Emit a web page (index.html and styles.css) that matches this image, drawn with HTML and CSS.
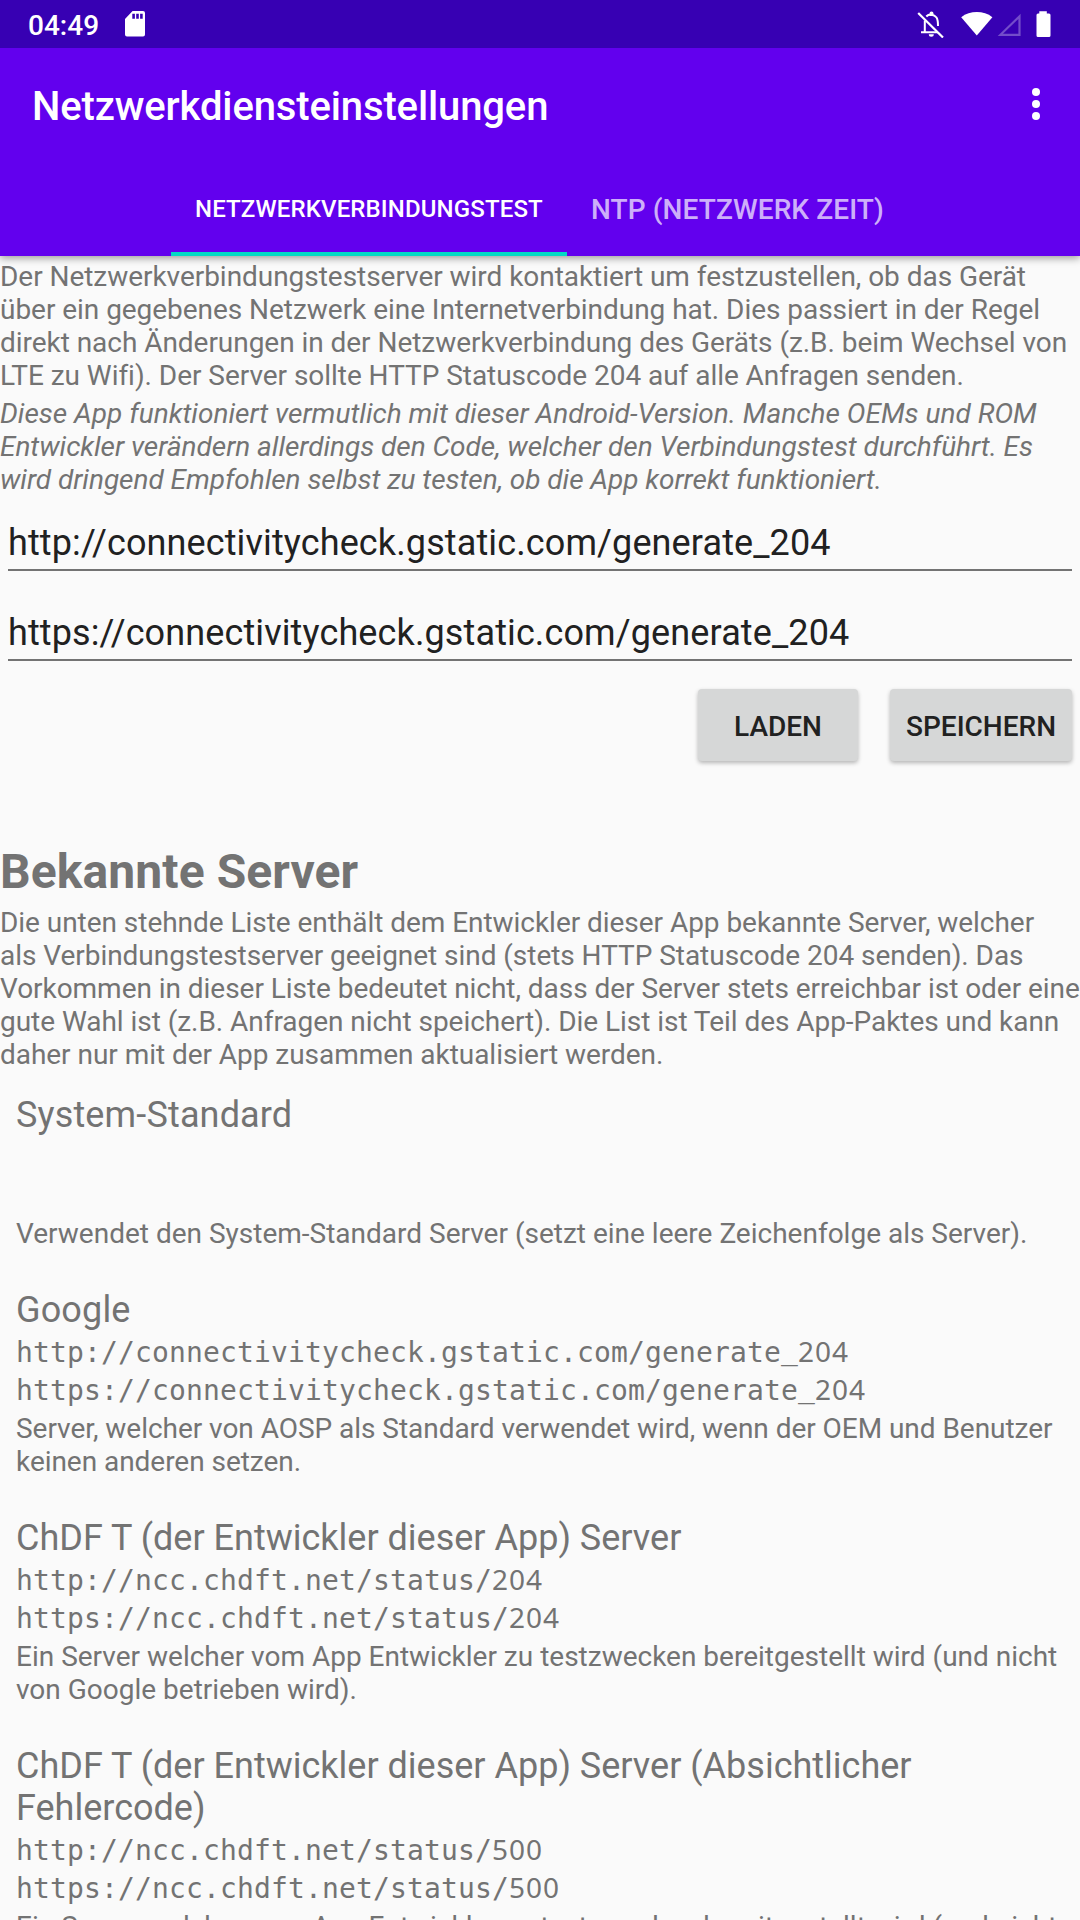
FILE: index.html
```html
<!DOCTYPE html>
<html lang="de">
<head>
<meta charset="utf-8">
<title>Netzwerkdiensteinstellungen</title>
<link rel="stylesheet" href="styles.css">
</head>
<body>
<div class="screen">
  <header class="header">
    <div class="status-bar">
      <span class="clock">04:49</span>
      <svg class="sd-icon" width="20" height="26" viewBox="0 0 20 26"><path fill="#fff" fill-rule="evenodd" d="M7.6 0H18a2 2 0 0 1 2 2v21.500a2 2 0 0 1-2 2H2a2 2 0 0 1-2-2V8zM7.300 2.700v5h2.600v-5zM11.200 2.700v5h2.600v-5zM15.100 2.700v5h2.600v-5z"/></svg>
      <span class="spacer"></span>
      <svg class="status-icons" width="136" height="28" viewBox="0 0 136 28">
        <g fill="none" stroke="#fff" stroke-width="2">
          <path d="M1.200 3 26 27.500" stroke-width="2.200"/>
          <path d="M7.800 10.500V22M4 22.300h17M9.300 6.500C12 3.700 17 4 19.500 7.500c1.300 2 1.500 4 1.500 8.500"/>
        </g>
        <path fill="#fff" d="M12.500 6V3.500a2 2 0 0 1 4 0V6zM11.800 24.300h5a2.500 2.500 0 0 1-5 0z"/>
        <path fill="#fff" d="M59.800 25.600 44.200 7.200C53 .4 66.600.4 75.400 7.200z"/>
        <path fill="none" stroke="#fff" stroke-opacity=".3" stroke-width="2.200" d="M102.500 6.400V24.800H83.400z"/>
        <path fill="#fff" d="M122.300 1.200h7.500V3.400h2.200a1.500 1.500 0 0 1 1.500 1.500V25.500a1.500 1.500 0 0 1-1.500 1.500H121a1.500 1.500 0 0 1-1.500-1.500V4.900A1.500 1.500 0 0 1 121 3.400h1.300z"/>
      </svg>
    </div>
    <div class="toolbar">
      <h1 class="app-title">Netzwerkdiensteinstellungen</h1>
      <svg class="menu-icon" width="8" height="32" viewBox="0 0 8 32" fill="#fff"><circle cx="4" cy="4" r="4"/><circle cx="4" cy="16" r="4"/><circle cx="4" cy="28" r="4"/></svg>
    </div>
    <nav class="tabs">
      <span class="tab tab-active">NETZWERKVERBINDUNGSTEST</span>
      <span class="tab tab-idle">NTP (NETZWERK ZEIT)</span>
    </nav>
  </header>
  <main>
    <p class="text text-tight">Der Netzwerkverbindungstestserver wird kontaktiert um festzustellen, ob das Gerät<br>über ein gegebenes Netzwerk eine Internetverbindung hat. Dies passiert in der Regel<br>direkt nach Änderungen in der Netzwerkverbindung des Geräts (z.B. beim Wechsel von<br>LTE zu Wifi). Der Server sollte HTTP Statuscode 204 auf alle Anfragen senden.</p>
    <p class="text text-italic">Diese App funktioniert vermutlich mit dieser Android-Version. Manche OEMs und ROM<br><span class="text-tight">Entwickler verändern allerdings den Code, welcher den Verbindungstest durchführt. Es<br>wird dringend Empfohlen selbst zu testen, ob die App korrekt funktioniert.</span></p>
    <div class="field"><div class="field-value">http://connectivitycheck.gstatic.com/generate_204</div></div>
    <div class="field"><div class="field-value">https://connectivitycheck.gstatic.com/generate_204</div></div>
    <div class="actions">
      <button class="button button-load">LADEN</button>
      <button class="button button-save">SPEICHERN</button>
    </div>
    <h2 class="heading">Bekannte Server</h2>
    <p class="text text-tight">Die unten stehnde Liste enthält dem Entwickler dieser App bekannte Server, welcher<br>als Verbindungstestserver geeignet sind (stets HTTP Statuscode 204 senden). Das<br>Vorkommen in dieser Liste bedeutet nicht, dass der Server stets erreichbar ist oder eine<br>gute Wahl ist (z.B. Anfragen nicht speichert). Die List ist Teil des App-Paktes und kann<br>daher nur mit der App zusammen aktualisiert werden.</p>
    <section class="server">
      <h3 class="name name-short">System-Standard</h3>
      <div class="url"></div>
      <div class="url"></div>
      <p class="text">Verwendet den System-Standard Server (setzt eine leere Zeichenfolge als Server).</p>
    </section>
    <section class="server">
      <h3 class="name name-short">Google</h3>
      <div class="url">http://connectivitycheck.gstatic.com/generate<span class="underscore">_</span><span class="digits">204</span></div>
      <div class="url">https://connectivitycheck.gstatic.com/generate<span class="underscore">_</span><span class="digits">204</span></div>
      <p class="text text-tight">Server, welcher von AOSP als Standard verwendet wird, wenn der OEM und Benutzer<br>keinen anderen setzen.</p>
    </section>
    <section class="server">
      <h3 class="name">ChDF T (der Entwickler dieser App) Server</h3>
      <div class="url">http://ncc.chdft.net/status/<span class="digits">204</span></div>
      <div class="url">https://ncc.chdft.net/status/<span class="digits">204</span></div>
      <p class="text">Ein Server welcher vom App Entwickler zu testzwecken bereitgestellt wird (und nicht<br>von Google betrieben wird).</p>
    </section>
    <section class="server">
      <h3 class="name">ChDF T (der Entwickler dieser App) Server (Absichtlicher<br>Fehlercode)</h3>
      <div class="url">http://ncc.chdft.net/status/<span class="digits">500</span></div>
      <div class="url">https://ncc.chdft.net/status/<span class="digits">500</span></div>
      <p class="text">Ein Server welcher vom App Entwickler zu testzwecken bereitgestellt wird (und nicht</p>
    </section>
  </main>
</div>
</body>
</html>
```
FILE: styles.css
```css
* { box-sizing: border-box; }
body, h1, h2, h3, p { margin: 0; }
body { background: #fafafa; }
.screen {
  width: 1080px;
  height: 1920px;
  overflow: hidden;
  background: #fafafa;
  color: #737373;
  font-family: Roboto, "Liberation Sans", sans-serif;
}
.header {
  position: relative;
  height: 256px;
  background: #6200ee;
  color: #fff;
  box-shadow: 0 2px 8px rgba(0, 0, 0, .4);
}
.status-bar {
  display: flex;
  height: 48px;
  padding: 0 27px 0 28px;
  background: #3700b3;
}
.clock { font-size: 28px; font-weight: 500; line-height: 51px; width: 97px; }
.sd-icon { margin-top: 11px; }
.spacer { flex: 1; }
.status-icons { margin: 10px 0 0; }
.toolbar {
  display: flex;
  align-items: center;
  justify-content: space-between;
  height: 112px;
  padding: 0 40px 0 32px;
}
.app-title { font-size: 40px; font-weight: 500; line-height: 48px; padding-top: 6px; letter-spacing: -.13px; }
.tabs { display: flex; height: 96px; padding-left: 171px; }
.tab { padding: 0 24px; line-height: 99px; font-weight: 500; white-space: nowrap; }
.tab-active { width: 396px; font-size: 24px; letter-spacing: .14px; border-bottom: 4px solid #03dac5; }
.tab-idle { font-size: 28px; letter-spacing: .11px; color: rgba(255, 255, 255, .7); }
.text { padding: 4px 0 1px; font-size: 28px; line-height: 33px; white-space: nowrap; }
.text-tight { letter-spacing: -.042px; }
.text-italic { font-style: italic; }
.field { height: 90px; padding: 24px 8px 0; }
.field-value {
  height: 50px;
  padding-top: 1px;
  border-bottom: 2px solid #737373;
  color: #212121;
  font-size: 36px;
  letter-spacing: .12px;
  line-height: 42px;
  white-space: nowrap;
}
.actions {
  display: flex;
  justify-content: flex-end;
  gap: 32px;
  height: 160px;
  padding: 12px 8px 0 0;
}
.button {
  height: 72px;
  padding: 3px 0 0;
  border: 0;
  border-radius: 4px;
  background: #d6d7d7;
  color: #212121;
  font: 500 28px/33px Roboto, "Liberation Sans", sans-serif;
  box-shadow: 0 2px 4px rgba(0, 0, 0, .28);
}
.button-load { width: 160px; }
.button-save { width: 182px; }
.heading { height: 65px; padding-top: 7px; font-size: 48px; font-weight: 700; letter-spacing: .1px; line-height: 56px; }
.server { padding: 16px; }
.name { padding: 6px 0 1px; font-size: 36px; font-weight: 400; line-height: 42px; white-space: nowrap; }
.name-short { letter-spacing: .15px; }
.url {
  height: 38px;
  font: 28px/38px "DejaVu Sans Mono", monospace;
  letter-spacing: .143px;
  white-space: nowrap;
}
.underscore { line-height: 1; vertical-align: 3px; }
.digits { font-family: "Noto Sans", sans-serif; letter-spacing: .984px; }
```
